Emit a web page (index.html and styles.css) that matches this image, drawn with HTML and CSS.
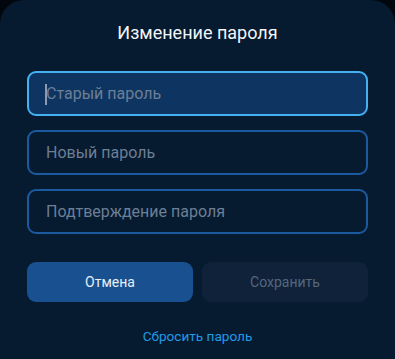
FILE: index.html
```html
<!DOCTYPE html>
<html lang="ru">
<head>
<meta charset="utf-8">
<link rel="stylesheet" href="styles.css">
</head>
<body>
<div class="page">
  <div class="dialog">
    <h1 class="title">Изменение пароля</h1>
    <div class="fields">
      <div class="field field-focused"><span class="caret"></span><span class="placeholder">Старый пароль</span></div>
      <div class="field"><span class="placeholder">Новый пароль</span></div>
      <div class="field"><span class="placeholder">Подтверждение пароля</span></div>
    </div>
    <div class="actions">
      <button class="btn btn-cancel">Отмена</button>
      <button class="btn btn-save">Сохранить</button>
    </div>
    <a class="reset" href="#">Сбросить пароль</a>
  </div>
</div>
</body>
</html>
```
FILE: styles.css
```css
html, body {
  margin: 0;
  padding: 0;
  background: #02070d;
}
.page {
  width: 395px;
  height: 359px;
  overflow: hidden;
}
.dialog {
  background: #061a30;
  border-radius: 24px 24px 0 0;
  height: 380px;
  padding: 0 27px;
  box-sizing: border-box;
  font-family: Roboto, "Noto Sans", sans-serif;
  display: flex;
  flex-direction: column;
}
.title {
  margin: 0;
  padding-top: 21px;
  height: 71px;
  box-sizing: border-box;
  font-size: 18px;
  font-weight: 400;
  color: #f2f5f8;
  text-align: center;
  line-height: 24px;
}
.fields {
  display: flex;
  flex-direction: column;
  gap: 14px;
}
.field {
  height: 45px;
  box-sizing: border-box;
  border: 2px solid #1c5aa0;
  border-radius: 9px;
  display: flex;
  align-items: center;
  padding-left: 17px;
  position: relative;
}
.field-focused {
  border-color: #46b1f2;
  background: #0e3561;
}
.placeholder {
  font-size: 16px;
  color: #6c7f96;
}
.caret {
  position: absolute;
  left: 16px;
  top: 11px;
  width: 1.5px;
  height: 21px;
  background: #8a9bb0;
}
.actions {
  display: flex;
  gap: 9px;
  margin-top: 28px;
}
.btn {
  flex: 1;
  height: 40px;
  border: 0;
  border-radius: 9px;
  font-family: inherit;
  font-size: 14px;
  padding: 0;
}
.btn-cancel {
  background: #19508f;
  color: #e8eef5;
}
.btn-save {
  background: #0f223a;
  color: #56677c;
}
.reset {
  align-self: center;
  margin-top: 26px;
  font-size: 13.6px;
  color: #1f9ce6;
  text-decoration: none;
}
```
